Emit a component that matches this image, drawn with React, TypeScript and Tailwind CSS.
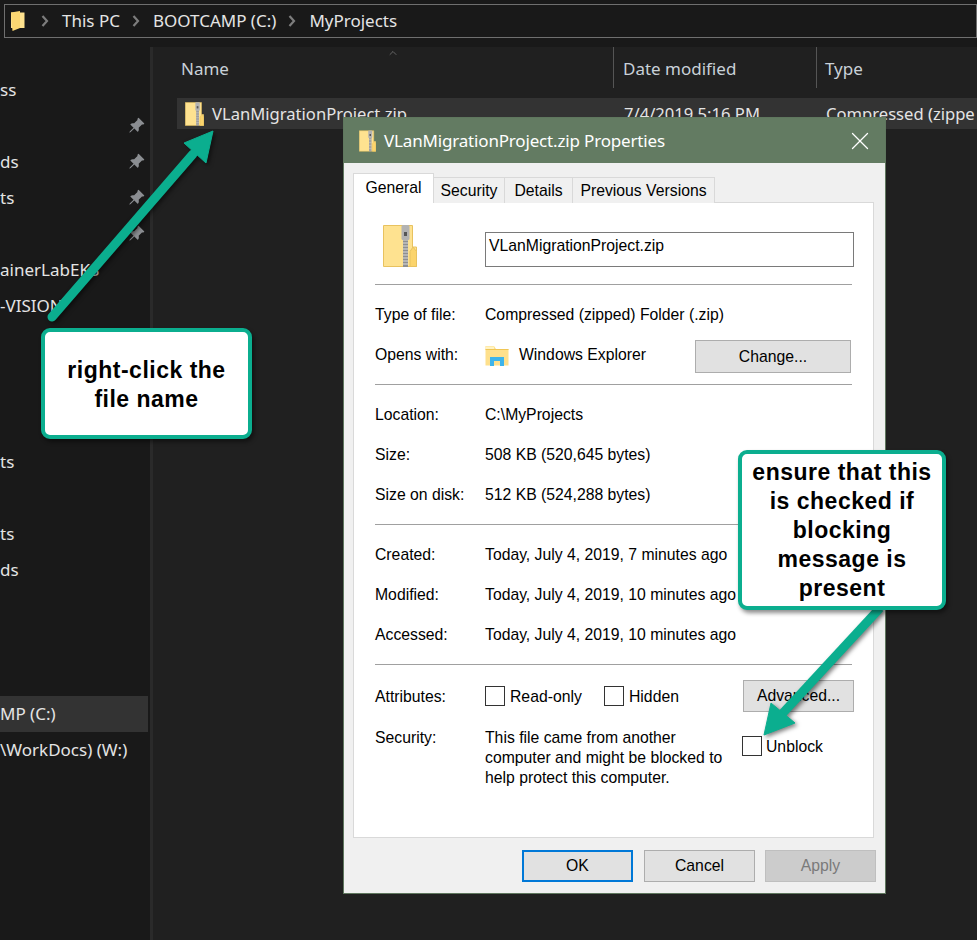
import React from 'react';
import { X, ChevronUp } from 'lucide-react';
import { BsPinAngleFill } from 'react-icons/bs';

const uiFont = 'font-["Noto_Sans","Open_Sans",sans-serif]';
const dlgFont = 'font-["Liberation_Sans",Arial,sans-serif]';

const navRows = [
  { label: 'ss' },
  { label: '', pin: true },
  { label: 'ds', pin: true },
  { label: 'ts', pin: true },
  { label: '', pin: true },
  { label: 'ainerLabEKS' },
  { label: '-VISION' },
  { label: '' },
  { label: '' },
  { label: '' },
  { label: 'ts', gap: true },
  { label: '' },
  { label: 'ts' },
  { label: 'ds' },
  { label: '' },
  { label: '' },
  { label: '' },
  { label: 'MP (C:)', selected: true },
  { label: '\\WorkDocs) (W:)' },
];

function ZipIcon({ className }: { className?: string }) {
  return (
    <svg viewBox="0 0 34 42" className={className}>
      <path d="M0.5 0.5H29.5V22H33.5V41.5H0.5Z" fill="#fee290" stroke="#e8c25f" />
      <path d="M27 41.5V26.5L30 22L33.5 26.5V41.5Z" fill="#fbd46c" stroke="#e8c25f" />
      <rect x="20" y="12" width="5" height="30" fill="#8f8f8f" />
      <path d="M20 15h5M20 18h5M20 21h5M20 24h5M20 27h5M20 30h5M20 33h5M20 36h5M20 39h5" stroke="#dcdcdc" strokeWidth="1" />
      <rect x="18.5" y="0" width="8" height="15" rx="1.5" fill="#b2b2b2" />
      <rect x="21" y="7" width="3" height="4" fill="#555555" />
    </svg>
  );
}

function FolderIcon({ className }: { className?: string }) {
  return (
    <svg viewBox="0 0 14 20" className={className}>
      <path d="M0 1.5H13.5V17H0Z" fill="#ffe28e" />
      <path d="M0 1.5L9 0V17L1.5 20Z" fill="#fcd772" />
    </svg>
  );
}

function ExplorerIcon({ className }: { className?: string }) {
  return (
    <svg viewBox="0 0 24 21" className={className}>
      <path d="M0.5 1H9L11 4H23.5V20.5H0.5Z" fill="#fee08c" />
      <rect x="1" y="1.5" width="8" height="2.5" fill="#fff3c4" />
      <rect x="0.5" y="4" width="23" height="1" fill="#f0c655" />
      <path d="M5 21V12H19V21H15V16H9V21Z" fill="#3eb4ea" />
    </svg>
  );
}

function Crumb({ text }: { text: string }) {
  return (
    <div className="flex items-center">
      <svg viewBox="0 0 8 12" className="w-2 h-3 ml-3 mr-[13px] shrink-0">
        <path d="M1.5 1L6 6L1.5 11" fill="none" stroke="#7d7d7d" strokeWidth="2.2" />
      </svg>
      <span>{text}</span>
    </div>
  );
}

function Sep() {
  return <div className="h-px bg-[#a0a0a0]" />;
}

function Row({ label, children }: { label: string; children: React.ReactNode }) {
  return (
    <div className="flex items-center h-5 pt-[2px]">
      <span className="w-[110px] shrink-0">{label}</span>
      {children}
    </div>
  );
}

function Section({ children }: { children: React.ReactNode }) {
  return <div className="flex flex-col gap-5 pt-[19px] pb-5">{children}</div>;
}

function Box() {
  return <span className="block w-5 h-5 shrink-0 bg-white border border-[#333]" />;
}

function DlgButton({ label, className }: { label: string; className: string }) {
  return (
    <div className={`flex items-center justify-center border ${className}`}>{label}</div>
  );
}

function Callout({ className, children }: { className: string; children: React.ReactNode }) {
  return (
    <div
      className={`absolute flex flex-col items-center justify-center bg-white border-4 border-[#0bae8f] rounded-[9px] shadow-[2px_3px_4px_rgba(0,0,0,0.45)] text-black font-bold text-[23px] leading-[29px] tracking-[0.5px] text-center ${dlgFont} ${className}`}
    >
      {children}
    </div>
  );
}

export default function App() {
  return (
    <div className={`relative w-[977px] h-[940px] overflow-hidden bg-[#191919] text-[#e4e4e4] ${uiFont}`}>
      {/* address bar */}
      <div className="pt-1 pl-1 h-[47px]">
        <div className="flex items-center h-[34px] border border-[#6f6f6f] pl-[6px] text-[17px] whitespace-nowrap">
          <FolderIcon className="w-[14px] h-5 mr-1" />
          <Crumb text="This PC" />
          <Crumb text="BOOTCAMP (C:)" />
          <Crumb text="MyProjects" />
        </div>
      </div>

      <div className="flex h-[893px]">
        {/* nav pane */}
        <div className="w-[150px] shrink-0 pt-[25px] text-[17px] whitespace-nowrap">
          {navRows.map((r, i) => (
            <div
              key={i}
              className={`flex items-center justify-between h-9 pr-[3px] w-[148px] ${r.gap ? 'mt-3' : ''} ${r.selected ? 'bg-[#333333]' : ''}`}
            >
              <span>{r.label}</span>
              {r.pin && <BsPinAngleFill className="w-[17px] h-[17px] -mt-px text-[#8b8e92]" />}
            </div>
          ))}
        </div>
        <div className="w-[3px] shrink-0 bg-[#2a2a2a]" />

        {/* file list */}
        <div className="relative flex-1 min-w-0 bg-[#202020] overflow-hidden">
          <ChevronUp className="absolute left-[232px] top-0 w-4 h-3 text-[#a8a8a8]" strokeWidth={1} />
          <div className="flex h-[51px] text-[17px] text-[#c9d1d8] whitespace-nowrap">
            <div className="w-[460px] shrink-0 pl-[28px] pt-[9px]">Name</div>
            <div className="w-[203px] shrink-0 h-[41px] border-l border-[#555] pl-[9px] pt-[9px]">Date modified</div>
            <div className="flex-1 h-[41px] border-l border-[#555] pl-[8px] pt-[9px]">Type</div>
          </div>
          <div className="flex items-center h-[31px] ml-6 bg-[#333333] text-[16.6px] whitespace-nowrap">
            <ZipIcon className="w-[19px] h-6 ml-2 mr-[8px] shrink-0" />
            <span className="w-[412px] shrink-0 pt-[2px]">VLanMigrationProject.zip</span>
            <span className="w-[202px] shrink-0 pt-[2px]">7/4/2019 5:16 PM</span>
            <span className="pt-[2px]">Compressed (zippe</span>
          </div>
        </div>
      </div>

      {/* arrow to the file name */}
      <svg viewBox="0 0 977 940" className="absolute inset-0 w-[977px] h-[940px] pointer-events-none">
        <g fill="#0bae8f" stroke="#0bae8f" style={{ filter: 'drop-shadow(2px 2px 2px rgba(0,0,0,0.5))' }}>
          <path d="M52 317L193 154" strokeWidth="9" strokeLinecap="round" fill="none" />
          <path d="M213 131L184 143L206 163Z" strokeWidth="1" />
        </g>
      </svg>

      {/* properties dialog */}
      <div className={`absolute left-[343px] top-[117px] w-[543px] h-[777px] flex flex-col bg-[#f0f0f0] border border-[#5f775e] text-[15.75px] text-black ${dlgFont}`}>
        <div className={`flex items-center h-[45px] shrink-0 bg-[#637b62] text-white text-[17px] tracking-[-0.17px] pl-[15px] pr-[10px] ${uiFont}`}>
          <ZipIcon className="w-[17px] h-[22px] mr-2" />
          <span className="flex-1">VLanMigrationProject.zip Properties</span>
          <X className="w-[30px] h-[30px]" strokeWidth={1} />
        </div>

        <div className="flex flex-col flex-1 pl-[9px] pr-[11px] pt-[10px]">
          <div className="flex items-end h-[30px] relative z-10 -mb-px">
            <div className="flex items-center justify-center w-[81px] h-[30px] bg-white border border-b-0 border-[#d9d9d9] pb-[1px]">General</div>
            <div className="flex items-center justify-center w-[71px] h-[26px] bg-[#f0f0f0] border border-l-0 border-b-0 border-[#d9d9d9]">Security</div>
            <div className="flex items-center justify-center w-[68px] h-[26px] bg-[#f0f0f0] border border-l-0 border-b-0 border-[#d9d9d9]">Details</div>
            <div className="flex items-center justify-center w-[142px] h-[26px] bg-[#f0f0f0] border border-l-0 border-b-0 border-[#d9d9d9]">Previous Versions</div>
          </div>
          <div className="h-[636px] bg-white border border-[#d9d9d9] pl-[21px] pr-[21px]">
            <div className="flex items-start h-[81px] pt-[29px]">
              <ZipIcon className="w-[34px] h-[42px] ml-2 mt-[-7px] mr-[68px] shrink-0" />
              <div className="flex items-center w-[369px] h-[35px] shrink-0 border border-[#7a7a7a] pl-[3px] pb-[7px]">VLanMigrationProject.zip</div>
            </div>
            <Sep />
            <Section>
              <Row label="Type of file:">Compressed (zipped) Folder (.zip)</Row>
              <Row label="Opens with:">
                <ExplorerIcon className="w-6 h-[21px] shrink-0 mr-[10px]" />
                <span className="w-[176px] shrink-0">Windows Explorer</span>
                <DlgButton label="Change..." className="w-[156px] h-[33px] shrink-0 -mb-[3px] bg-[#e1e1e1] border-[#adadad]" />
              </Row>
            </Section>
            <Sep />
            <Section>
              <Row label="Location:">C:\MyProjects</Row>
              <Row label="Size:">508 KB (520,645 bytes)</Row>
              <Row label="Size on disk:">512 KB (524,288 bytes)</Row>
            </Section>
            <Sep />
            <Section>
              <Row label="Created:">Today, July 4, 2019, 7 minutes ago</Row>
              <Row label="Modified:">Today, July 4, 2019, 10 minutes ago</Row>
              <Row label="Accessed:">Today, July 4, 2019, 10 minutes ago</Row>
            </Section>
            <Sep />
            <div className="flex items-center h-8 mt-[15px]">
              <span className="w-[110px] shrink-0 pt-[2px]">Attributes:</span>
              <Box />
              <span className="w-[99px] shrink-0 pl-[5px] pt-[2px]">Read-only</span>
              <Box />
              <span className="w-[119px] shrink-0 pl-[5px] pt-[2px]">Hidden</span>
              <DlgButton label="Advanced..." className="w-[111px] h-8 shrink-0 bg-[#e1e1e1] border-[#adadad]" />
            </div>
            <div className="flex mt-[15px] leading-5">
              <span className="w-[110px] shrink-0 pt-px">Security:</span>
              <div className="w-[250px] mr-[7px] shrink-0 pt-px">
                This file came from another computer and might be blocked to help protect this computer.
              </div>
              <div className="flex items-center h-5 mt-[9px]">
                <Box />
                <span className="pl-1 pt-[2px]">Unblock</span>
              </div>
            </div>
          </div>
          <div className="flex justify-end gap-[10px] mt-3 -mr-[2px]">
            <DlgButton label="OK" className="w-[111px] h-8 mr-px bg-[#e1e1e1] border-2 border-[#0078d7]" />
            <DlgButton label="Cancel" className="w-[111px] h-8 bg-[#e1e1e1] border-[#adadad]" />
            <DlgButton label="Apply" className="w-[111px] h-8 bg-[#cccccc] border-[#bfbfbf] text-[#7a7a7a]" />
          </div>
        </div>
      </div>

      {/* arrow to the checkbox runs over the dialog */}
      <svg viewBox="0 0 977 940" className="absolute inset-0 w-[977px] h-[940px] pointer-events-none">
        <g fill="#0bae8f" stroke="#0bae8f" style={{ filter: 'drop-shadow(2px 2px 2px rgba(0,0,0,0.5))' }}>
          <path d="M880 608L782 714" strokeWidth="9" fill="none" />
          <path d="M764 735L771 703L795 723Z" strokeWidth="1" />
        </g>
      </svg>

      <Callout className="left-[41px] top-[328px] w-[211px] h-[111px] pt-[2px]">
        <span>right-click the</span>
        <span>file name</span>
      </Callout>
      <Callout className="left-[738px] top-[450px] w-[208px] h-[160px]">
        <span>ensure that this</span>
        <span>is checked if</span>
        <span>blocking</span>
        <span>message is</span>
        <span>present</span>
      </Callout>
    </div>
  );
}
